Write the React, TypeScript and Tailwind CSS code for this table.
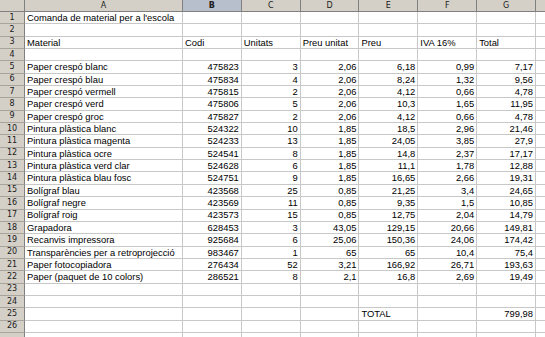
const cols = ["A", "B", "C", "D", "E", "F", "G"];

type Cell = { v: string; num?: boolean };

const items: string[][] = [
  ["Paper crespó blanc", "475823", "3", "2,06", "6,18", "0,99", "7,17"],
  ["Paper crespó blau", "475834", "4", "2,06", "8,24", "1,32", "9,56"],
  ["Paper crespó vermell", "475815", "2", "2,06", "4,12", "0,66", "4,78"],
  ["Paper crespó verd", "475806", "5", "2,06", "10,3", "1,65", "11,95"],
  ["Paper crespó groc", "475827", "2", "2,06", "4,12", "0,66", "4,78"],
  ["Pintura plàstica blanc", "524322", "10", "1,85", "18,5", "2,96", "21,46"],
  ["Pintura plàstica magenta", "524233", "13", "1,85", "24,05", "3,85", "27,9"],
  ["Pintura plàstica ocre", "524541", "8", "1,85", "14,8", "2,37", "17,17"],
  ["Pintura plàstica verd clar", "524628", "6", "1,85", "11,1", "1,78", "12,88"],
  ["Pintura plàstica blau fosc", "524751", "9", "1,85", "16,65", "2,66", "19,31"],
  ["Bolígraf blau", "423568", "25", "0,85", "21,25", "3,4", "24,65"],
  ["Bolígraf negre", "423569", "11", "0,85", "9,35", "1,5", "10,85"],
  ["Bolígraf roig", "423573", "15", "0,85", "12,75", "2,04", "14,79"],
  ["Grapadora", "628453", "3", "43,05", "129,15", "20,66", "149,81"],
  ["Recanvis impressora", "925684", "6", "25,06", "150,36", "24,06", "174,42"],
  ["Transparències per a retroprojecció", "983467", "1", "65", "65", "10,4", "75,4"],
  ["Paper fotocopiadora", "276434", "52", "3,21", "166,92", "26,71", "193,63"],
  ["Paper (paquet de 10 colors)", "286521", "8", "2,1", "16,8", "2,69", "19,49"],
];

function buildRows(): Cell[][] {
  const rows: Cell[][] = [];
  const empty = () => cols.map(() => ({ v: "" }));
  const r1 = empty();
  r1[0] = { v: "Comanda de material per a l'escola" };
  rows.push(r1);
  rows.push(empty());
  rows.push(["Material", "Codi", "Unitats", "Preu unitat", "Preu", "IVA 16%", "Total"].map((v) => ({ v })));
  rows.push(empty());
  items.forEach((it) => rows.push(it.map((v, i) => ({ v, num: i > 0 }))));
  rows.push(empty());
  rows.push(empty());
  const r25 = empty();
  r25[4] = { v: "TOTAL" };
  r25[6] = { v: "799,98", num: true };
  rows.push(r25);
  rows.push(empty());
  rows.push(empty());
  rows.push(empty());
  return rows;
}

export default function App() {
  const rows = buildRows();
  return (
    <div className="w-[545px] h-[337px] overflow-hidden bg-white text-black" style={{ fontFamily: "'Liberation Sans', Arial, sans-serif" }}>
      {/* column headers */}
      <div className="flex h-[12px]">
        <div className="w-[25px] shrink-0 bg-[#d4d0c8] border-r border-b border-[#808080]" />
        {cols.map((c, i) => (
          <div
            key={c}
            className={`${i === 0 ? "w-[158px]" : "w-[58.83px]"} shrink-0 border-r border-b border-[#808080] flex items-center justify-center text-[8px] leading-none ${c === "B" ? "bg-[#b8bfcc] font-bold" : "bg-[#d4d0c8]"} text-[#202020]`}
            style={{ fontFamily: "'DejaVu Sans', sans-serif" }}
          >
            {c}
          </div>
        ))}
        <div className="flex-1 bg-[#d4d0c8] border-b border-[#808080]" />
      </div>
      {rows.map((row, ri) => (
        <div key={ri} className="flex h-[12.35px]">
          <div
            className="w-[25px] shrink-0 bg-[#d4d0c8] border-r border-b border-r-[#808080] border-b-[#a8a49c] flex items-center justify-center text-[8px] leading-none text-[#202020]"
            style={{ fontFamily: "'DejaVu Sans', sans-serif" }}
          >
            {ri < 26 ? ri + 1 : ""}
          </div>
          {row.map((cell, ci) => (
            <div
              key={ci}
              className={`${ci === 0 ? "w-[158px]" : "w-[58.83px]"} shrink-0 border-r border-b border-[#c8c8c8] flex items-center px-[2px] text-[9.4px] leading-none whitespace-nowrap ${cell.num ? "justify-end" : "justify-start"} overflow-hidden`}
            >
              {cell.v}
            </div>
          ))}
          <div className="flex-1 border-b border-[#c8c8c8]" />
        </div>
      ))}
    </div>
  );
}
